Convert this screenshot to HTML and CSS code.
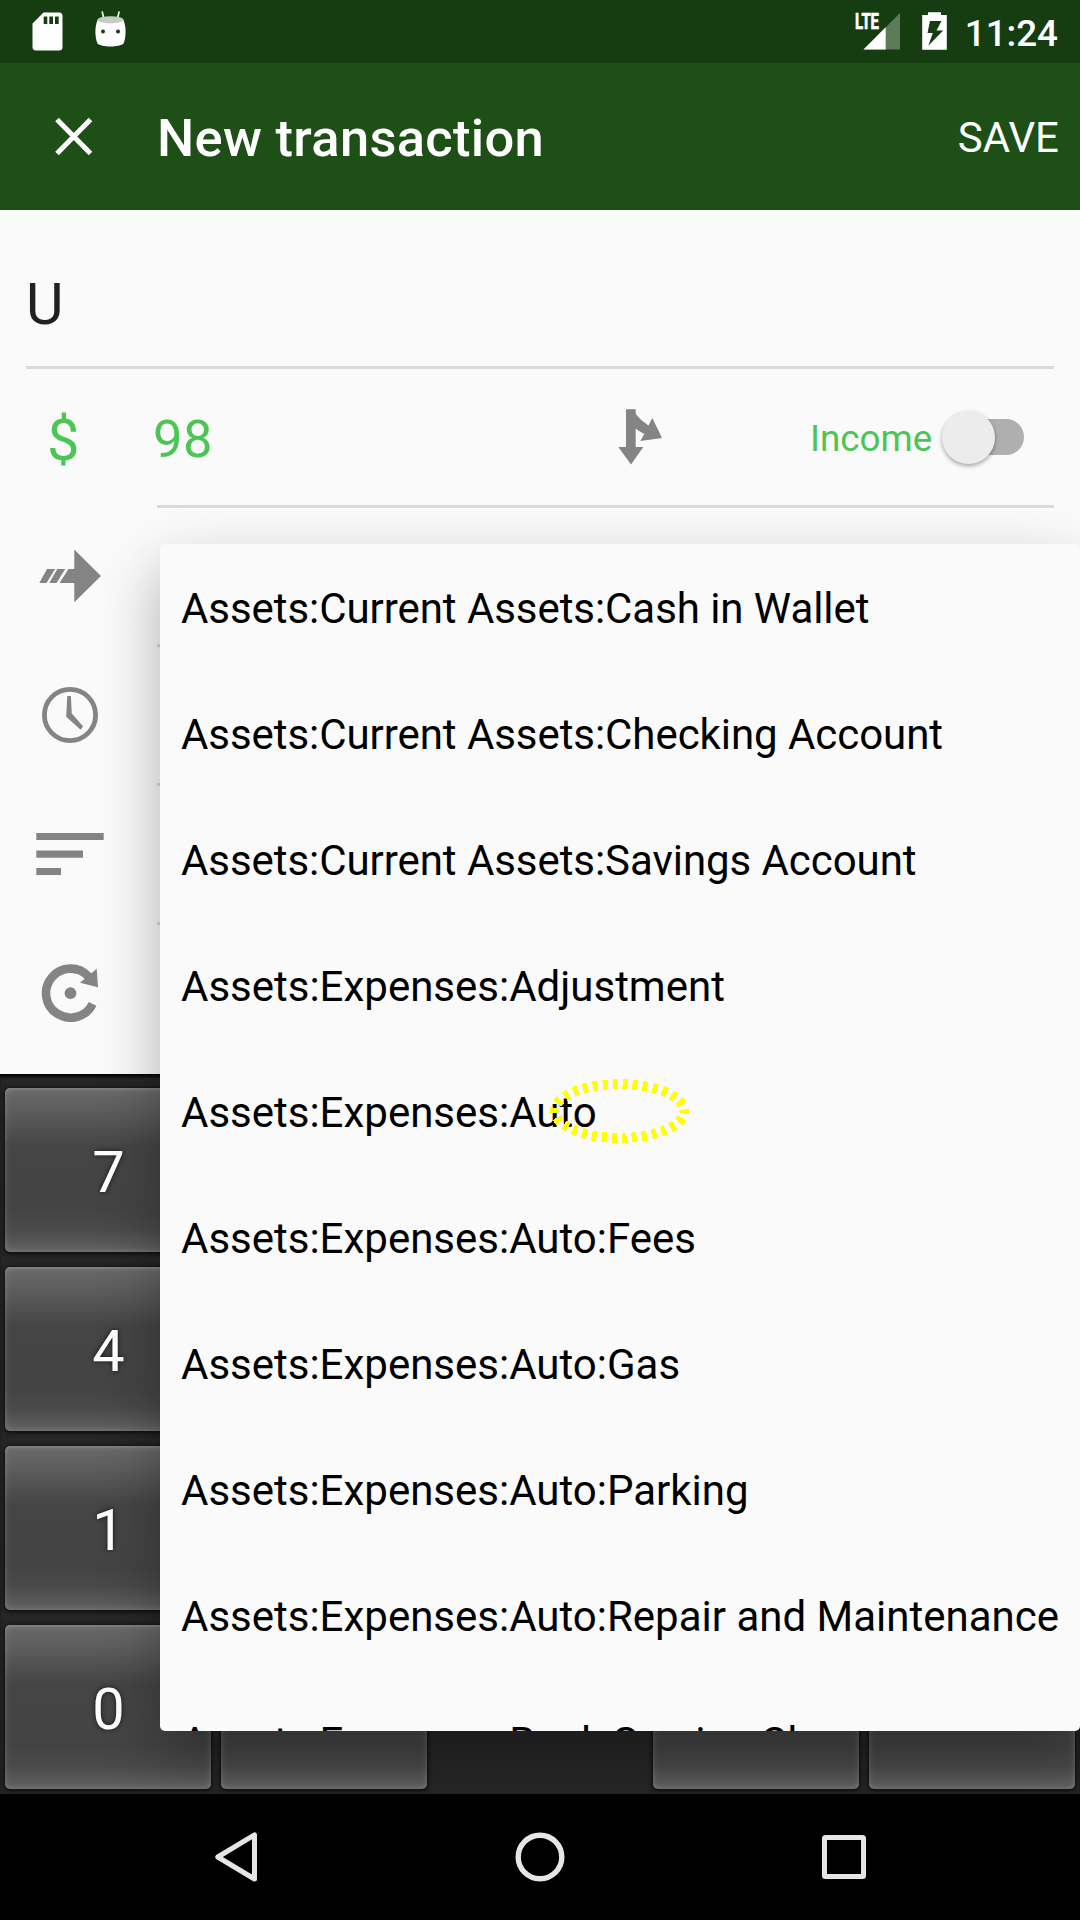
FILE: index.html
```html
<!DOCTYPE html>
<html lang="en">
<head>
<meta charset="utf-8">
<title>New transaction</title>
<link rel="stylesheet" href="styles.css">
</head>
<body>
<div class="screen">
  <header class="status">
    <svg class="status-left" viewBox="0 0 140 63">
      <path fill="#fff" fill-rule="evenodd" d="M43.500 12.500H59a3.500 3.500 0 0 1 3.500 3.500V47a3.500 3.500 0 0 1-3.500 3.500H36a3.500 3.500 0 0 1-3.500-3.500V23.500ZM43.700 16.500V24H47.300V16.500ZM49.300 16.500V24H53V16.500ZM55 16.500V24H58.700V16.500Z"/>
      <path stroke="#fff" stroke-width="1.600" stroke-linecap="round" d="M102.300 12l1.500 7M119 12l-1.500 7"/>
      <path fill="#fff" d="M97.500 20C94.700 27 94.700 37 97.500 43.500 101 47.500 120 47.500 123.500 43.500 126.300 37 126.300 27 123.500 20Z"/>
      <ellipse cx="110.500" cy="19.800" rx="13" ry="3.600" fill="#c3cec1"/>
      <circle cx="103" cy="31.500" r="2" fill="#163d11"/><circle cx="118" cy="31.500" r="2" fill="#163d11"/>
    </svg>
    <div class="status-right">
      <svg class="signal" viewBox="850 0 100 63">
        <path fill="#5d7b59" d="M900 13V49.500H863.500Z"/>
        <path fill="#fff" d="M885.700 27.300V49.500H863.500Z"/>
        <path fill="#163d11" d="M852 11H880.500V30H852Z"/>
        <text class="lte" x="855" y="29" textLength="24" lengthAdjust="spacingAndGlyphs">LTE</text>
        <path fill="#fff" fill-rule="evenodd" d="M928 12.200H941V15H946.800V49.800H922.200V15H928ZM930 21H941.500L936.500 30.500H943.200L928.300 45.800 932.800 33H927.500Z"/>
      </svg>
      <span class="time">11:24</span>
    </div>
  </header>
  <div class="toolbar">
    <svg class="close" viewBox="0 0 157 147"><path stroke="#fff" stroke-width="5" d="M57 56.500 90.500 90.500M90.500 56.500 57 90.500"/></svg>
    <h1 class="title">New transaction</h1>
    <span class="save">SAVE</span>
  </div>
  <main class="form">
    <div class="name">U</div>
    <div class="row">
      <span class="currency">$</span>
      <div class="field">
        <span class="amount">98</span>
        <svg class="split" viewBox="610 401 60 72"><path fill="#848484" d="M626 409.300H635.700V414Q641 421 648.500 425.500L652.300 418 662 438 640.300 441 644.300 434Q639 431.500 635.700 428.500V447H643.300L631 464.500 618.300 447H626Z"/></svg>
        <span class="income">Income</span>
        <span class="switch"><span class="thumb"></span></span>
      </div>
    </div>
    <div class="row">
      <svg class="icon" viewBox="0 508 157 139"><path fill="#848484" d="M74.300 549.500 101 576 74.300 602.300V583H59.500L68.500 569H74.300ZM47 569H55L46.500 583H39.300ZM57.300 569H65.300L56.500 583H49.300Z"/></svg>
      <div class="field"></div>
    </div>
    <div class="row">
      <svg class="icon" viewBox="0 647 157 139"><circle cx="70" cy="715" r="25.600" fill="none" stroke="#848484" stroke-width="4.800"/><path fill="#848484" d="M67.300 696H70.900L71.800 713.500 83.200 726.500 80.600 729.700 66.200 716.700Z"/></svg>
      <div class="field"></div>
    </div>
    <div class="row">
      <svg class="icon" viewBox="0 786 157 139"><path fill="#848484" d="M36.300 833H103.700V840H36.300ZM36.300 850.500H83V857.700H36.300ZM36.300 868H61V875H36.300Z"/></svg>
      <div class="field"></div>
    </div>
    <div class="row last">
      <svg class="icon" viewBox="0 925 157 149"><path fill="none" stroke="#848484" stroke-width="8.600" d="M92.600 1003.800A24.500 24.500 0 1 1 88.500 976.500"/><path fill="#848484" d="M96.700 968.700 98 987.300 80 982.700Z"/><circle cx="70.500" cy="993.200" r="5.900" fill="#848484"/></svg>
      <div class="field"></div>
    </div>
  </main>
  <section class="keypad">
    <div class="key">7</div><div class="key"></div><div class="key"></div><div class="key"></div><div class="key"></div>
    <div class="key">4</div><div class="key"></div><div class="key"></div><div class="key"></div><div class="key"></div>
    <div class="key">1</div><div class="key"></div><div class="key"></div><div class="key"></div><div class="key"></div>
    <div class="key">0</div><div class="key"></div><div></div><div class="key"></div><div class="key"></div>
  </section>
  <nav class="nav">
    <svg viewBox="0 1794 1080 126" fill="none" stroke="#e6e6e6" stroke-width="5">
      <path stroke-linejoin="round" d="M217.800 1857 254.500 1834.800V1879Z"/>
      <circle cx="540" cy="1857" r="21.800" stroke-width="5.400"/>
      <rect x="824.500" y="1837.500" width="39" height="39" rx="1"/>
    </svg>
  </nav>
  <ul class="popup">
    <li class="tight">Assets:Current Assets:Cash in Wallet</li>
    <li class="tight">Assets:Current Assets:Checking Account</li>
    <li class="tight">Assets:Current Assets:Savings Account</li>
    <li>Assets:Expenses:Adjustment</li>
    <li>Assets:Expenses:Auto</li>
    <li>Assets:Expenses:Auto:Fees</li>
    <li>Assets:Expenses:Auto:Gas</li>
    <li>Assets:Expenses:Auto:Parking</li>
    <li>Assets:Expenses:Auto:Repair and Maintenance</li>
    <li>Assets:Expenses:Bank Service Charge</li>
  </ul>
  <svg class="marker" viewBox="540 1070 160 84"><ellipse cx="619.500" cy="1111" rx="64.500" ry="27" fill="none" stroke="#ff0" stroke-width="10" stroke-dasharray="5 5" stroke-dashoffset="2.500" shape-rendering="crispEdges"/></svg>
</div>
</body>
</html>
```
FILE: styles.css
```css
* { box-sizing: border-box; }
body { margin: 0; font-family: Roboto, sans-serif; }
svg { display: block; flex: none; }
.screen {
  position: relative;
  width: 1080px;
  height: 1920px;
  overflow: hidden;
  display: flex;
  flex-direction: column;
  background: #fafafa;
}
.status {
  height: 63px;
  flex: none;
  display: flex;
  justify-content: space-between;
  background: #163d11;
  color: #fff;
}
.status-left { width: 140px; height: 63px; }
.status-right { display: flex; align-items: center; gap: 15px; padding-right: 22px; }
.signal { width: 100px; height: 63px; }
.lte { font-size: 22px; font-weight: 700; fill: #fff; stroke: #fff; stroke-width: .7px; }
.time { font-size: 36.750px; font-weight: 500; line-height: 43px; padding-top: 3px; }
.toolbar {
  height: 147px;
  flex: none;
  display: flex;
  align-items: center;
  padding-right: 21px;
  background: #1d4f16;
  color: #fff;
}
.close { width: 157px; height: 147px; }
.title { margin: 0; flex: 1; font-size: 52.500px; font-weight: 500; line-height: 62px; padding-top: 3px; letter-spacing: .3px; }
.save { font-size: 42px; padding-top: 2px; }
.form { height: 864px; flex: none; }
.name {
  height: 159px;
  margin: 0 26px;
  border-bottom: 3px solid #dadada;
  font-size: 57.750px;
  line-height: 189px;
  color: #212121;
}
.row { height: 139px; display: flex; padding-right: 26px; }
.icon { width: 157px; height: 139px; }
.field {
  flex: 1;
  display: flex;
  align-items: center;
  border-bottom: 3px solid #dadada;
}
.last { height: 149px; }
.last .icon { height: 149px; }
.last .field { border: 0; }
.currency { width: 157px; padding-left: 47px; font-size: 57.750px; line-height: 142px; color: #4bc654; }
.amount { width: 453px; margin-left: -4px; padding-top: 3px; font-size: 52.500px; letter-spacing: .4px; color: #4bc654; }
.split { width: 60px; height: 72px; margin-left: 4px; }
.income { margin-left: 140px; font-size: 36.750px; color: #4bc654; padding-top: 2px; }
.switch {
  width: 72px;
  height: 36px;
  margin-left: auto;
  margin-right: 30px;
  border-radius: 18px;
  background: #afafaf;
  display: flex;
  align-items: center;
}
.thumb {
  flex: none;
  width: 53px;
  height: 53px;
  margin-left: -10px;
  border-radius: 50%;
  background: #ececec;
  box-shadow: 0 2px 4px rgba(0, 0, 0, .35);
}
.keypad {
  height: 720px;
  flex: none;
  display: grid;
  grid-template-columns: repeat(5, 206px);
  grid-template-rows: repeat(4, 164px);
  gap: 15px 10px;
  padding: 14px 5px 0;
  background: #262626;
  box-shadow: inset 0 4px 3px -1px #050505;
}
.key {
  display: flex;
  align-items: center;
  justify-content: center;
  padding: 4px 0 0 1px;
  border-radius: 5px;
  background: linear-gradient(#6a6a6a, #5c5c5c 15%, #454545 36%, #444 74%, #4a4a4a 86%, #626262);
  box-shadow: inset 0 0 6px rgba(255, 255, 255, .2), inset 0 2px 1px rgba(255, 255, 255, .08), 0 1px 4px 1px #0c0c0c;
  color: #fff;
  font-size: 57.750px;
  text-shadow: 0 0 5px rgba(0, 0, 0, .7);
}
.nav { height: 126px; background: #000; position: relative; }
.nav svg { width: 1080px; height: 126px; }
.popup {
  position: absolute;
  left: 160px;
  top: 544px;
  width: 920px;
  height: 1187px;
  margin: 0;
  padding: 2px 0 0;
  list-style: none;
  overflow: hidden;
  border-radius: 5px;
  background: #fafafa;
  box-shadow: 0 25px 60px rgba(0, 0, 0, .3);
}
.popup li { height: 126px; padding-left: 21px; font-size: 42px; line-height: 126px; white-space: nowrap; color: #000; }
.popup .tight { letter-spacing: -.06px; }
.marker { position: absolute; left: 540px; top: 1070px; width: 160px; height: 84px; }
```
